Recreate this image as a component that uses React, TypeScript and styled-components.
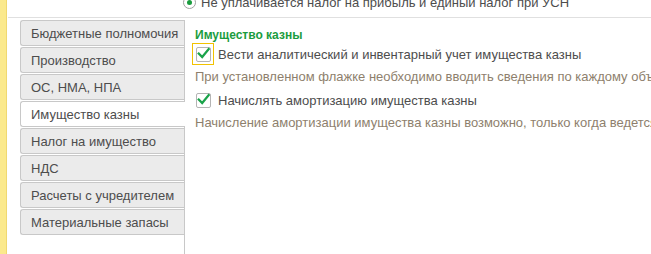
import React from "react";
import styled, { createGlobalStyle } from "styled-components";

const Global = createGlobalStyle`
  html, body { margin: 0; padding: 0; background: #fff; }
  body { font-family: "Liberation Sans", Arial, sans-serif; overflow: hidden; }
`;

const Page = styled.div`
  display: flex;
  width: 651px;
  height: 254px;
  overflow: hidden;
  background: #fff;
`;

const Strip = styled.div`
  width: 6px;
  flex: none;
  background: #fbe98c;
  border-right: 1px solid #f0d870;
`;

const Main = styled.div`
  flex: 1;
  display: flex;
  flex-direction: column;
  min-width: 0;
`;

const TopRow = styled.div`
  display: flex;
  align-items: center;
  gap: 5px;
  height: 16px;
  margin-top: -6px;
  padding-left: 176px;
  font-size: 13px;
  color: #4d4d4d;
  white-space: nowrap;
`;

const Radio = styled.span`
  width: 11px;
  height: 11px;
  border: 1px solid #a0a0a0;
  border-radius: 50%;
  display: flex;
  align-items: center;
  justify-content: center;
  background: #fff;
  &::after {
    content: "";
    width: 5px;
    height: 5px;
    border-radius: 50%;
    background: #1a9c3e;
  }
`;

const Divider = styled.div`
  height: 1px;
  background: #e0e0e0;
  margin-top: 7px;
  margin-left: 1px;
`;

const Body = styled.div`
  display: flex;
  flex: 1;
  padding-top: 2px;
`;

const TabList = styled.div`
  width: 164px;
  margin-left: 13px;
  display: flex;
  flex-direction: column;
  border-right: 1px solid #c8c8c8;
  flex: none;
`;

const Tab = styled.div<{ $active?: boolean }>`
  height: 26px;
  box-sizing: border-box;
  display: flex;
  align-items: center;
  padding-left: 10px;
  margin-bottom: 1px;
  font-size: 13px;
  color: #4d4d4d;
  white-space: nowrap;
  border: 1px solid #c8c8c8;
  border-right: none;
  border-radius: 3px 0 0 3px;
  background: ${(p) => (p.$active ? "#fff" : "#ebebeb")};
  margin-right: ${(p) => (p.$active ? "-1px" : "0")};
  position: relative;
`;

const Content = styled.div`
  flex: 1;
  padding-left: 10px;
  display: flex;
  flex-direction: column;
  white-space: nowrap;
  min-width: 0;
`;

const GroupTitle = styled.div`
  font-size: 12px;
  font-weight: bold;
  color: #1a9c3e;
  height: 14px;
  line-height: 14px;
  margin-top: 8px;
`;

const CheckRow = styled.div`
  display: flex;
  align-items: center;
  height: 24px;
  gap: 4px;
  font-size: 13px;
  color: #4d4d4d;
`;

const Focus = styled.span<{ $focused?: boolean }>`
  width: 22px;
  height: 22px;
  box-sizing: border-box;
  margin-left: -3px;
  border: 1px solid ${(p) => (p.$focused ? "#f2c200" : "transparent")};
  display: flex;
  align-items: center;
  justify-content: center;
  flex: none;
`;

const Box = styled.span`
  width: 15px;
  height: 15px;
  box-sizing: border-box;
  border: 1px solid #b4b4b4;
  border-radius: 2px;
  background: #fff;
  display: flex;
  align-items: center;
  justify-content: center;
`;

const Hint = styled.div`
  font-size: 13px;
  color: #8e7f6d;
  height: 22px;
  line-height: 22px;
`;

const Check = () => (
  <svg width="15" height="13" viewBox="0 0 15 13" style={{ marginTop: -2 }}>
    <path d="M2 6.5 L6 10.5 L13.5 1.5" fill="none" stroke="#1aa34a" strokeWidth="2.6" strokeLinecap="square" />
  </svg>
);

const tabs = [
  "Бюджетные полномочия",
  "Производство",
  "ОС, НМА, НПА",
  "Имущество казны",
  "Налог на имущество",
  "НДС",
  "Расчеты с учредителем",
  "Материальные запасы",
];

export default function App() {
  return (
    <>
      <Global />
      <Page>
        <Strip />
        <Main>
          <TopRow>
            <Radio />
            <span>Не уплачивается налог на прибыль и единый налог при УСН</span>
          </TopRow>
          <Divider />
          <Body>
            <TabList>
              {tabs.map((t) => (
                <Tab key={t} $active={t === "Имущество казны"}>
                  {t}
                </Tab>
              ))}
            </TabList>
            <Content>
              <GroupTitle>Имущество казны</GroupTitle>
              <CheckRow>
                <Focus $focused>
                  <Box>
                    <Check />
                  </Box>
                </Focus>
                <span>Вести аналитический и инвентарный учет имущества казны</span>
              </CheckRow>
              <Hint>При установленном флажке необходимо вводить сведения по каждому объекту имущества казны</Hint>
              <CheckRow>
                <Focus>
                  <Box>
                    <Check />
                  </Box>
                </Focus>
                <span>Начислять амортизацию имущества казны</span>
              </CheckRow>
              <Hint>Начисление амортизации имущества казны возможно, только когда ведется аналитический учет</Hint>
            </Content>
          </Body>
        </Main>
      </Page>
    </>
  );
}
